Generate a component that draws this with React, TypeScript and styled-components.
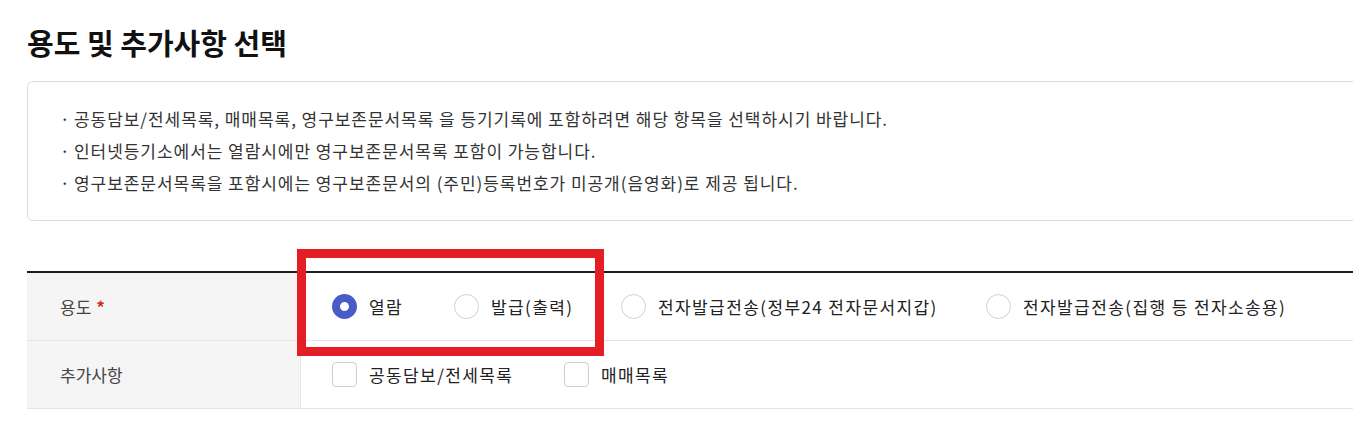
import styled, { createGlobalStyle } from 'styled-components';

const GlobalStyle = createGlobalStyle`
  html, body {
    margin: 0;
    padding: 0;
    background: #fff;
    overflow: hidden;
  }
  body {
    font-family: "Noto Sans CJK KR", "Noto Sans", sans-serif;
    color: #222;
  }
`;

const notices = [
  '공동담보/전세목록, 매매목록, 영구보존문서목록 을 등기기록에 포함하려면 해당 항목을 선택하시기 바랍니다.',
  '인터넷등기소에서는 열람시에만 영구보존문서목록 포함이 가능합니다.',
  '영구보존문서목록을 포함시에는 영구보존문서의 (주민)등록번호가 미공개(음영화)로 제공 됩니다.',
];

const purposes = [
  { label: '열람', checked: true, width: 122 },
  { label: '발급(출력)', checked: false, width: 167 },
  { label: '전자발급전송(정부24 전자문서지갑)', checked: false, width: 365 },
  { label: '전자발급전송(집행 등 전자소송용)', checked: false, width: 0 },
];

const extras = [
  { label: '공동담보/전세목록', width: 232 },
  { label: '매매목록', width: 0 },
];

export default function App() {
  return (
    <>
      <GlobalStyle />
      <Page>
        <Title>용도 및 추가사항 선택</Title>
        <NoticeBox>
          {notices.map((text) => (
            <NoticeItem key={text}>{text}</NoticeItem>
          ))}
        </NoticeBox>
        <Table>
          <Row>
            <Label>
              용도 <Required>*</Required>
            </Label>
            <Cell>
              {purposes.map((p) => (
                <Option key={p.label} $width={p.width}>
                  <Radio $checked={p.checked} />
                  <OptionText>{p.label}</OptionText>
                </Option>
              ))}
              <Highlight />
            </Cell>
          </Row>
          <Row>
            <Label>추가사항</Label>
            <Cell>
              {extras.map((e) => (
                <Option key={e.label} $width={e.width}>
                  <Checkbox />
                  <OptionText>{e.label}</OptionText>
                </Option>
              ))}
            </Cell>
          </Row>
        </Table>
      </Page>
    </>
  );
}

const Page = styled.div`
  width: 1360px;
  margin-left: 27px;
  padding-top: 22px;
`;

const Title = styled.h2`
  margin: 0;
  font-size: 29px;
  font-weight: 700;
  line-height: 40px;
  color: #111;
`;

const NoticeBox = styled.ul`
  list-style: none;
  margin: 19px 0 0;
  padding: 21px 32px 21px;
  border: 1px solid #dcdcdc;
  border-radius: 6px;
  height: 140px;
  box-sizing: border-box;
`;

const NoticeItem = styled.li`
  position: relative;
  padding-left: 14px;
  font-size: 17px;
  line-height: 32px;
  color: #333;
  letter-spacing: 0.95px;

  &::before {
    content: '·';
    position: absolute;
    left: 0;
    top: 0;
  }
`;

const Table = styled.div`
  margin-top: 50px;
  border-top: 2px solid #1e1e1e;
`;

const Row = styled.div`
  display: grid;
  grid-template-columns: 274px 1fr;
  height: 67px;
  border-bottom: 1px solid #e4e4e4;
`;

const Label = styled.div`
  display: flex;
  align-items: center;
  padding-left: 33px;
  background: #f5f5f5;
  border-right: 1px solid #e8e8e8;
  font-size: 17px;
  color: #444;
`;

const Required = styled.span`
  color: #d42b2b;
  margin-left: 5px;
  font-weight: 700;
`;

const Cell = styled.div`
  position: relative;
  display: flex;
  align-items: center;
  padding-left: 31px;
`;

const Option = styled.label<{ $width: number }>`
  display: flex;
  align-items: center;
  gap: 12px;
  width: ${(p) => (p.$width ? `${p.$width}px` : 'auto')};
  flex-shrink: 0;
`;

const Radio = styled.span<{ $checked: boolean }>`
  width: 25px;
  height: 25px;
  border-radius: 50%;
  box-sizing: border-box;
  flex-shrink: 0;
  background: #fff;
  border: ${(p) => (p.$checked ? '8px solid #4a5bc8' : '1px solid #cfcfcf')};
`;

const Checkbox = styled.span`
  width: 25px;
  height: 25px;
  border-radius: 4px;
  box-sizing: border-box;
  flex-shrink: 0;
  border: 1px solid #cfcfcf;
  background: #fff;
`;

const OptionText = styled.span`
  font-size: 17px;
  color: #222;
  letter-spacing: 1.4px;
`;

const Highlight = styled.div`
  position: absolute;
  left: -4px;
  top: -24px;
  width: 307px;
  height: 107px;
  border: 9px solid #e31e24;
  box-sizing: border-box;
  pointer-events: none;
`;
